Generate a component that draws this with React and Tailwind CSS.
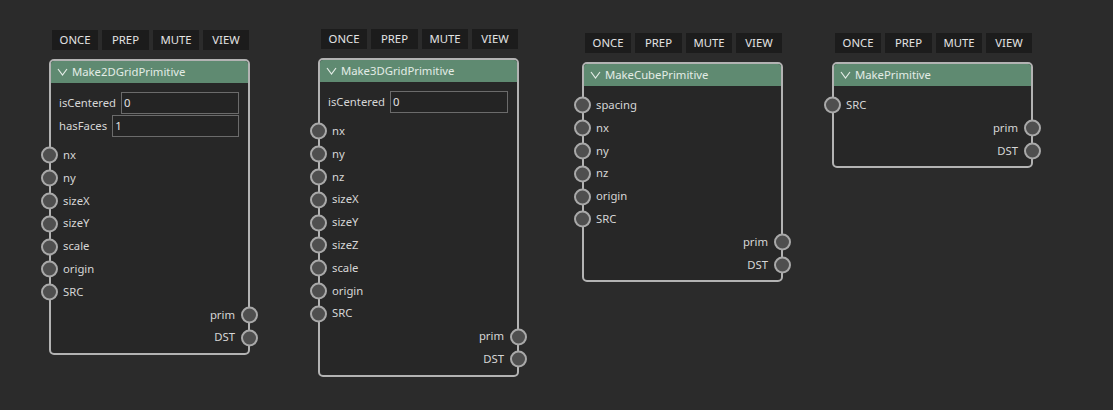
const FONT = { fontFamily: '"Noto Sans", "Open Sans", sans-serif' };

const nodes = [
  {
    title: "Make2DGridPrimitive",
    pos: "left-[49px] top-[30px]",
    params: [
      { name: "isCentered", value: "0" },
      { name: "hasFaces", value: "1" },
    ],
    inputs: ["nx", "ny", "sizeX", "sizeY", "scale", "origin", "SRC"],
  },
  {
    title: "Make3DGridPrimitive",
    pos: "left-[318px] top-[29px]",
    params: [{ name: "isCentered", value: "0" }],
    inputs: ["nx", "ny", "nz", "sizeX", "sizeY", "sizeZ", "scale", "origin", "SRC"],
  },
  {
    title: "MakeCubePrimitive",
    pos: "left-[582px] top-[33px]",
    params: [],
    inputs: ["spacing", "nx", "ny", "nz", "origin", "SRC"],
  },
  {
    title: "MakePrimitive",
    pos: "left-[832px] top-[33px]",
    params: [],
    inputs: ["SRC"],
  },
];

function Port({ side }) {
  return (
    <span
      className={
        "absolute top-1/2 -translate-y-1/2 w-[17px] h-[17px] rounded-full border-2 border-[#a9a9a9] bg-[#4f4f4f] " +
        (side === "left" ? "left-[-10px]" : "right-[-10px]")
      }
    />
  );
}

function Node({ title, pos, params, inputs }) {
  return (
    <div className={"absolute " + pos}>
      <div className="flex gap-[4px] pl-[3px] mb-[9px] text-[11.3px] text-[#e4e4e4]">
        <div className="w-[46px] h-[20px] bg-[#1c1c1c] flex items-center justify-center">ONCE</div>
        <div className="w-[47px] h-[20px] bg-[#1c1c1c] flex items-center justify-center">PREP</div>
        <div className="w-[46px] h-[20px] bg-[#1c1c1c] flex items-center justify-center">MUTE</div>
        <div className="w-[46px] h-[20px] bg-[#1c1c1c] flex items-center justify-center">VIEW</div>
      </div>
      <div className="w-[201px] border-2 border-[#b3b3b3] rounded-[5px] bg-[#272727]">
        <div className="h-[22px] bg-[#5f8a71] rounded-t-[3px] flex items-center pl-[6px] gap-[4px] text-[11.3px] text-[#e3ece6]">
          <svg width="11" height="8" viewBox="0 0 11 8" className="shrink-0">
            <path d="M1 1 L5.5 7 L10 1" fill="none" stroke="#e3ece6" strokeWidth="1.2" />
          </svg>
          <span>{title}</span>
        </div>
        <div className={(params.length ? "pt-[9px]" : "pt-[8px]") + " pb-[4px] text-[11.3px] text-[#d6d6d6]"}>
          {params.length > 0 && (
            <div className="mb-[6px]">
              {params.map((p) => (
                <div key={p.name} className="h-[23px] flex items-start pl-[8px] pr-[9px] gap-[5px]">
                  <span className="leading-[22px]">{p.name}</span>
                  <div className="flex-1 h-[22px] border border-[#6b6b6b] bg-[#242424] pl-[2px] leading-[20px] text-[#e2e2e2]">
                    {p.value}
                  </div>
                </div>
              ))}
            </div>
          )}
          {inputs.map((name) => (
            <div key={name} className="relative h-[22.8px] flex items-center pl-[12px]">
              <Port side="left" />
              <span>{name}</span>
            </div>
          ))}
          {["prim", "DST"].map((name) => (
            <div key={name} className="relative h-[22.8px] flex items-center justify-end pr-[13px]">
              <span>{name}</span>
              <Port side="right" />
            </div>
          ))}
        </div>
      </div>
    </div>
  );
}

export default function App() {
  return (
    <div className="relative w-[1113px] h-[410px] bg-[#2b2b2b] overflow-hidden" style={FONT}>
      {nodes.map((n) => (
        <Node key={n.title} {...n} />
      ))}
    </div>
  );
}
